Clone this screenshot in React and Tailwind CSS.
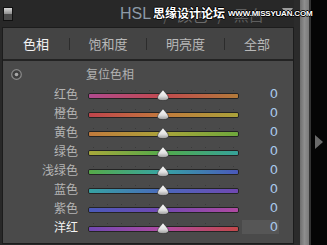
import React from "react";

const rows = [
  { label: "红色", grad: "bg-[linear-gradient(to_right,#b04a8e,#c24a4e,#b27a3a)]" },
  { label: "橙色", grad: "bg-[linear-gradient(to_right,#c0444c,#c27a3c,#aaa23a)]" },
  { label: "黄色", grad: "bg-[linear-gradient(to_right,#c27a3c,#aaa43a,#6ea83c)]" },
  { label: "绿色", grad: "bg-[linear-gradient(to_right,#a8a83a,#52aa4a,#36a29a)]" },
  { label: "浅绿色", grad: "bg-[linear-gradient(to_right,#56aa48,#36a4a4,#4a58ba)]" },
  { label: "蓝色", grad: "bg-[linear-gradient(to_right,#36a2a2,#4a68bc,#7048b2)]" },
  { label: "紫色", grad: "bg-[linear-gradient(to_right,#4a5aba,#7248b2,#b04aa2)]" },
  { label: "洋红", grad: "bg-[linear-gradient(to_right,#7048b2,#b04aa2,#c2484a)]", active: true },
];

const cjk = "font-['Noto_Sans_CJK_SC',sans-serif]";

function Thumb() {
  return (
    <svg width="12" height="12" viewBox="0 0 12 12" className="absolute left-[69px] top-[5px]">
      <defs>
        <linearGradient id="tg" x1="0" y1="0" x2="0" y2="1">
          <stop offset="0" stopColor="#ffffff" />
          <stop offset="0.6" stopColor="#e0e0e0" />
          <stop offset="1" stopColor="#989898" />
        </linearGradient>
      </defs>
      <path
        d="M6 0.4 C7 3 11.5 6 11.5 8.6 C11.5 10.6 9.8 11.6 6 11.6 C2.2 11.6 0.5 10.6 0.5 8.6 C0.5 6 5 3 6 0.4 Z"
        fill="url(#tg)"
        stroke="#2e2e2e"
        strokeWidth="0.6"
      />
    </svg>
  );
}

function Slider({ grad }) {
  return (
    <div className="relative w-[151px] h-full flex flex-col pt-[6px]">
      <div className="flex justify-between px-[5px] h-px">
        {Array.from({ length: 11 }).map((_, i) => (
          <div key={i} className="w-px h-px bg-[#3a3a3a]" />
        ))}
      </div>
      <div className="mt-[2px] h-[6px] rounded-[2px] border border-[#242424]">
        <div className={`h-full rounded-[1px] ${grad}`} />
      </div>
      <Thumb />
    </div>
  );
}

export default function App() {
  return (
    <div className="relative w-[327px] h-[245px] bg-[#282828] overflow-hidden flex">
      <div className="w-[294px] flex flex-col">
        <div className="h-[27px] flex items-start relative">
          <div className="ml-[3px] mt-[7px] w-[10px] h-[14px] border border-[#111] bg-[#4a4a4a] flex flex-col">
            <div className="h-[6px] bg-[linear-gradient(to_bottom,#d8d8d8,#8c8c8c)]" />
          </div>
          <div className="ml-[107px] mt-[4px] flex items-center h-[20px] text-[16px] leading-none">
            <span className="text-[#8d9aa7] font-['Liberation_Sans',sans-serif]">HSL</span>
            <span className={`ml-[12px] text-[#5a5a5a] ${cjk}`}>/</span>
            <span className={`ml-[8px] text-[#6c6c6c] text-[15px] ${cjk}`}>颜色</span>
            <span className={`ml-[10px] text-[#5a5a5a] ${cjk}`}>/</span>
            <span className={`ml-[10px] text-[#5e5e5e] text-[15px] ${cjk}`}>黑白</span>
          </div>
          <svg width="11" height="8" viewBox="0 0 11 8" className="absolute left-[282px] top-[8px]">
            <path d="M0 0 H11 L5.5 8 Z" fill="#9c9c9c" />
          </svg>
        </div>
        <div className="ml-[2px] w-[292px] h-[217px] border border-[#1c1c1c] flex flex-col">
          <div className={`h-[31px] bg-[#444444] flex items-center text-[13px] ${cjk} border-b-2 border-[#232323] box-content`}>
            <div className="w-[66px] text-center text-[#f2f2f2]">色相</div>
            <div className="w-px h-[12px] bg-[#2c2c2c]" />
            <div className="w-[76px] text-center text-[#b8b8b8]">饱和度</div>
            <div className="w-px h-[12px] bg-[#2c2c2c]" />
            <div className="w-[77px] text-center text-[#b8b8b8]">明亮度</div>
            <div className="w-px h-[12px] bg-[#2c2c2c]" />
            <div className="w-[64px] text-center text-[#b8b8b8]">全部</div>
          </div>
          <div className="flex-1 bg-[#4a4a4a] flex flex-col pt-[3px]">
            <div className="h-[20px] flex items-center">
              <svg width="11" height="11" viewBox="0 0 11 11" className="ml-[8px]">
                <circle cx="5.5" cy="5.5" r="4.8" fill="#3e3e3e" stroke="#8a8a8a" strokeWidth="1.2" />
                <circle cx="5.5" cy="5.5" r="1.8" fill="#a8a8a8" />
              </svg>
              <span className={`ml-[64px] text-[12px] text-[#b2b2b2] ${cjk}`}>复位色相</span>
            </div>
            {rows.map((r) => (
              <div key={r.label} className="h-[19px] flex items-center">
                <div
                  className={`w-[75px] text-right text-[12px] leading-none ${cjk} ${
                    r.active ? "text-[#f4f4f4]" : "text-[#b4b4b4]"
                  }`}
                >
                  {r.label}
                </div>
                <div className="ml-[10px] h-full">
                  <Slider grad={r.grad} />
                </div>
                <div
                  className={`ml-[3px] w-[37px] h-[14px] flex items-center justify-end pr-[1px] text-[13px] leading-none text-[#a9c8ea] font-['DejaVu_Sans',sans-serif] ${
                    r.active ? "bg-[#565656]" : ""
                  }`}
                >
                  0
                </div>
              </div>
            ))}
          </div>
        </div>
      </div>
      <div className="w-[6px] bg-[#2b2b2b]" />
      <div className="w-[9px] bg-[linear-gradient(to_right,#6e6e6e,#8e8e8e,#7a7a7a)]" />
      <div className="w-[2px] bg-[#333333]" />
      <div className="flex-1 bg-[#050505] flex flex-col">
        <svg width="8" height="14" viewBox="0 0 8 14" className="ml-[4px] mt-[135px]">
          <path d="M0 0 L8 7 L0 14 Z" fill="#6a6a6a" />
        </svg>
      </div>
      <div className="absolute left-[153px] top-[7px] flex items-end">
        <span
          className={`text-[12px] font-bold leading-none text-white ${cjk} [text-shadow:1px_0_0_#000,-1px_0_0_#000,0_1px_0_#000,0_-1px_0_#000]`}
        >
          思缘设计论坛
        </span>
        <span className="ml-[3px] mb-[1px] text-[8px] font-bold leading-none tracking-[-0.2px] text-white font-['Liberation_Sans',sans-serif] [text-shadow:1px_0_0_#000,-1px_0_0_#000,0_1px_0_#000,0_-1px_0_#000]">
          WWW.MISSYUAN.COM
        </span>
      </div>
    </div>
  );
}
